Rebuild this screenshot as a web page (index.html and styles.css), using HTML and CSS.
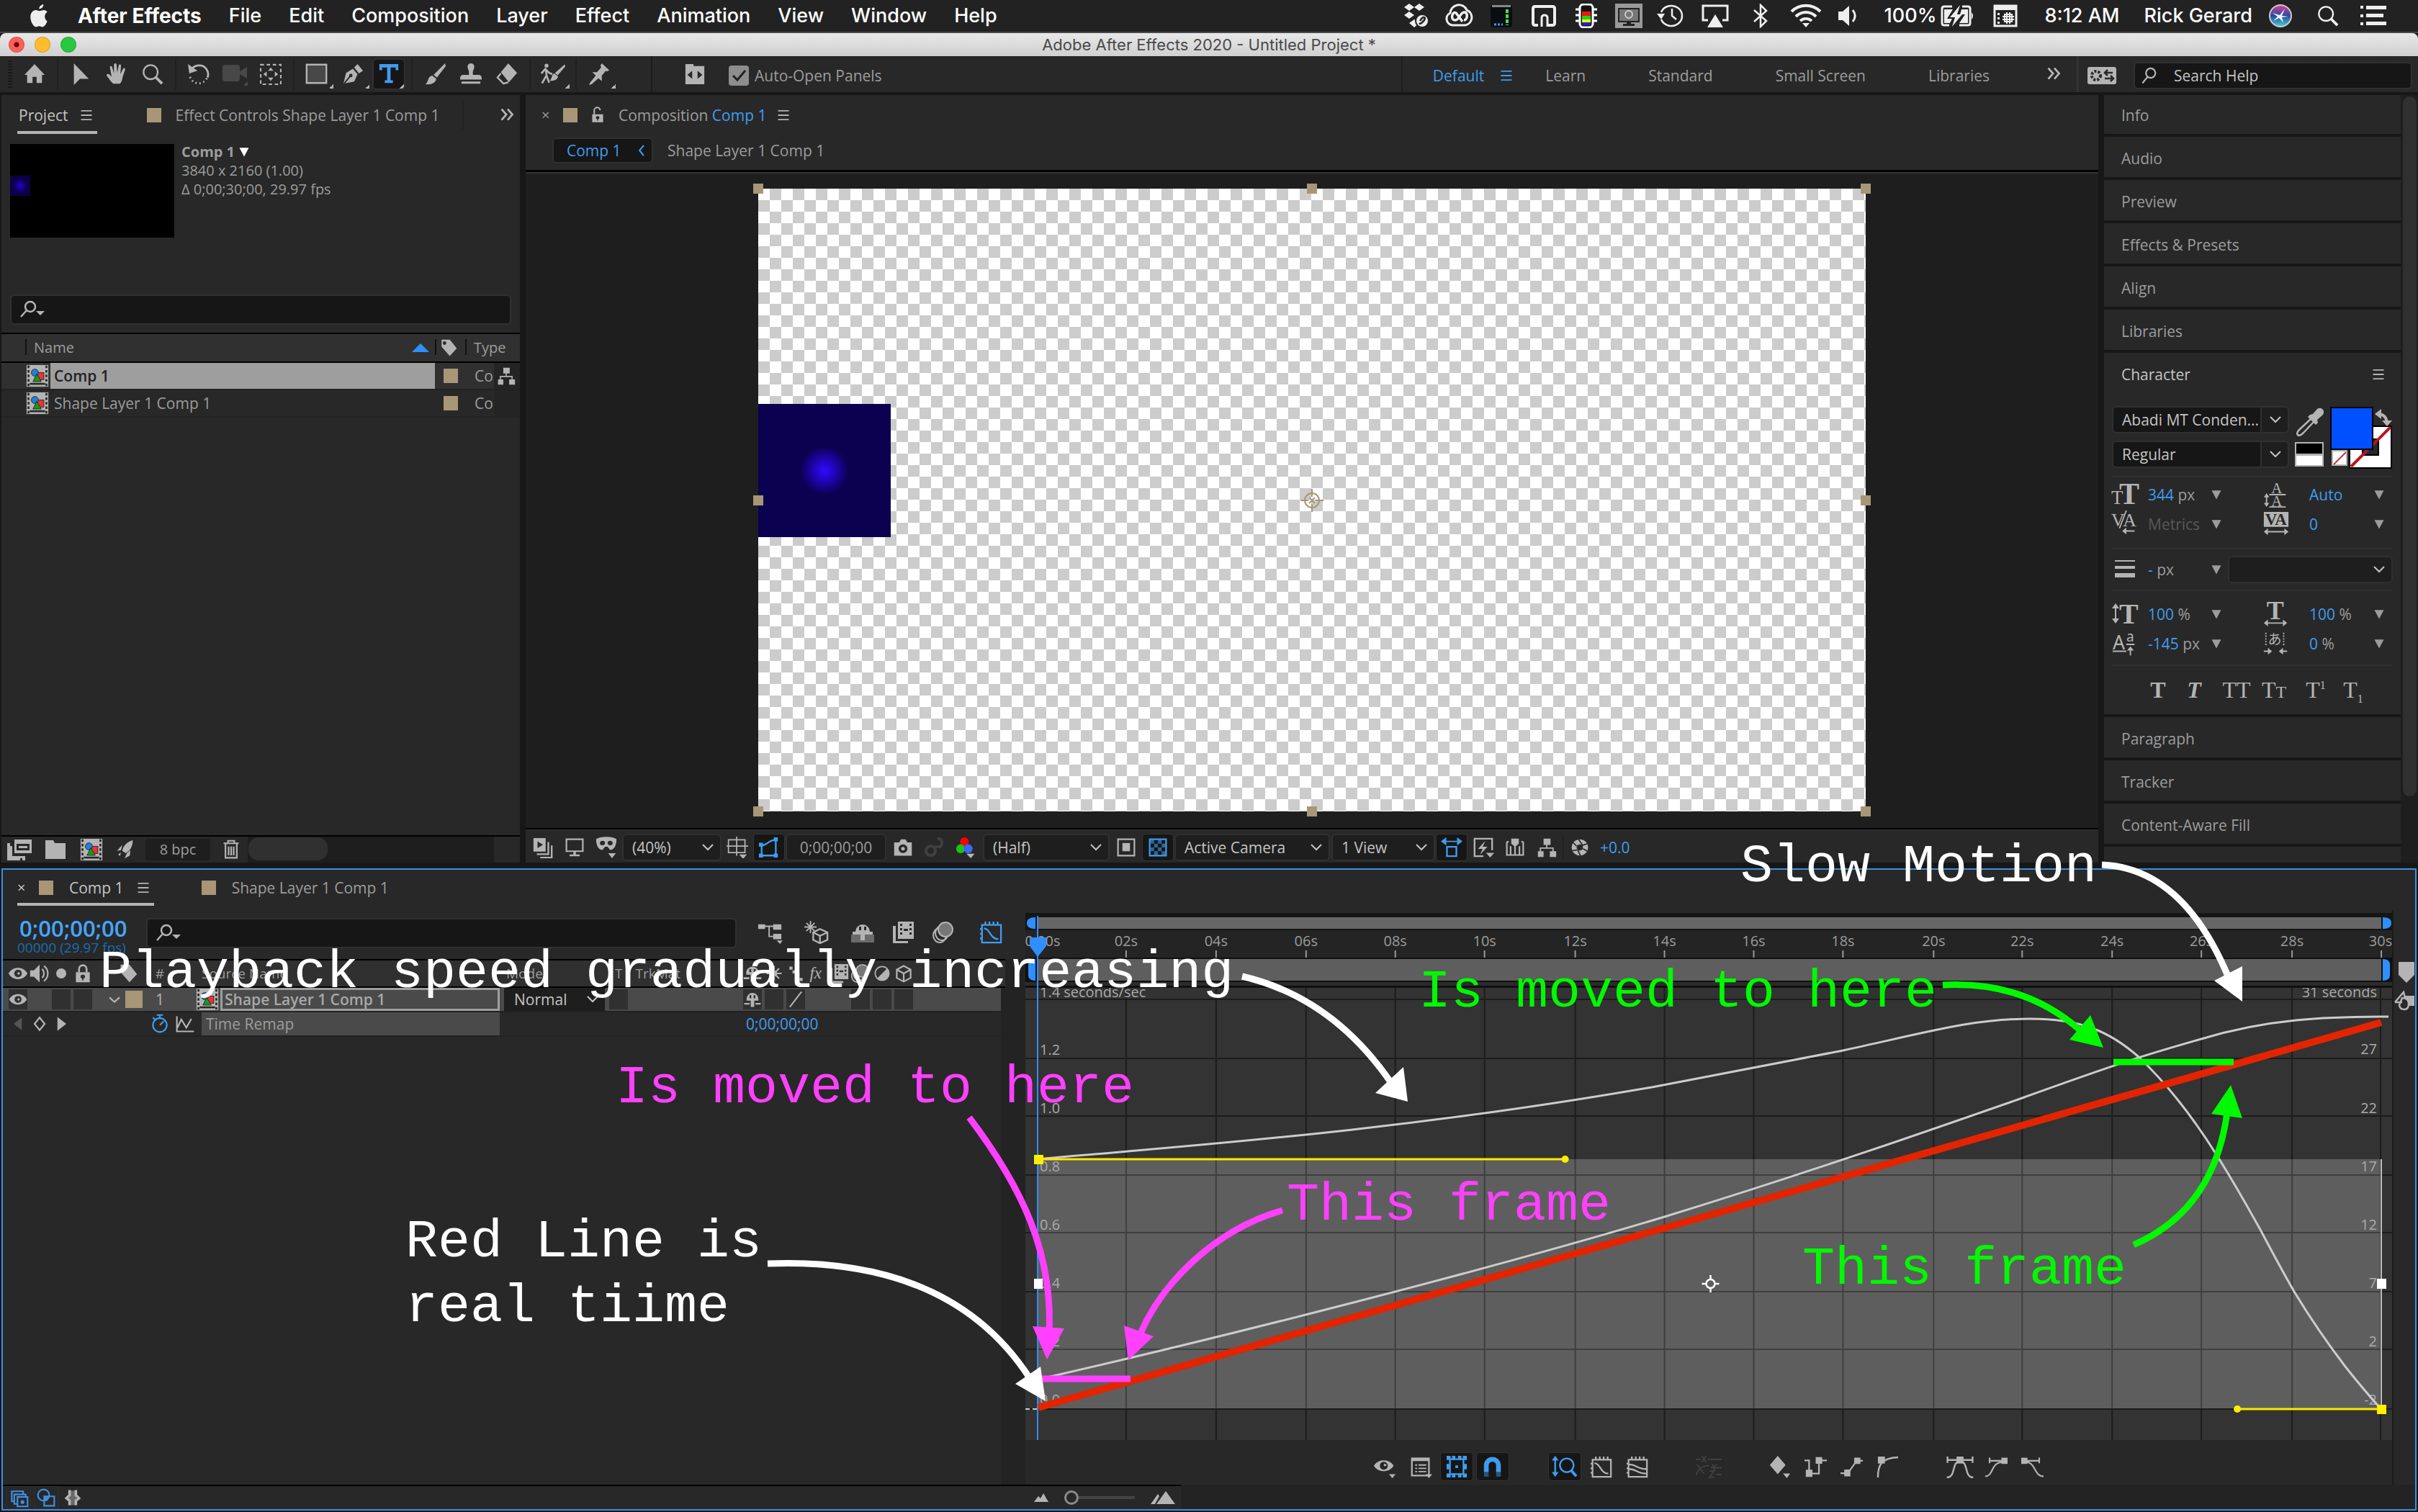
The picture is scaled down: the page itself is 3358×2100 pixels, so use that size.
FILE: index.html
```html
<!DOCTYPE html>
<html lang="en">
<head>
<meta charset="utf-8">
<title>Adobe After Effects 2020 - Untitled Project *</title>
<link rel="stylesheet" href="styles.css">
</head>
<body>
<svg class="sprite" aria-hidden="true">
  <symbol id="apple" viewBox="0 0 32 32"><path d="M21 1c.3 3-2.500 6-5.500 6C15.200 4 18 1.500 21 1zM26 23c-1.500 4-4 7.500-6.500 7.500-1.600 0-2.200-1-4-1s-2.500 1-4 1C8 30.500 4 24 4 17.500 4 12 7.500 8.500 11 8.500c2 0 3.500 1.200 5 1.200s3.200-1.400 5.500-1.200c2 .1 3.500 1 4.500 2.500-4.500 2.800-4 9.500 0 12z"/></symbol>
  <symbol id="menu" viewBox="0 0 32 32"><path d="M8 8.500h16v2H8zM8 15h16v2H8zM8 21.500h16v2H8z"/></symbol>
  <symbol id="search" viewBox="0 0 32 32"><g fill="none" stroke="currentColor" stroke-width="2.500"><circle cx="18" cy="12" r="7.500"/><path d="M13 18L5 28"/></g></symbol>
  <symbol id="searchmenu" viewBox="0 0 40 32"><g fill="none" stroke="currentColor" stroke-width="2.500"><circle cx="18" cy="12" r="7"/><path d="M13 17L5 26"/></g><path d="M26 18h12l-6 6z"/></symbol>
  <symbol id="lens" viewBox="0 0 32 32"><g fill="none" stroke="currentColor" stroke-width="2.500"><circle cx="13" cy="13" r="10.500"/><path d="M20 20l10 10" stroke-width="4"/></g></symbol>
  <symbol id="more" viewBox="0 0 32 32"><path fill="none" stroke="currentColor" stroke-width="3" d="M7 7l7 8-7 8M16 7l7 8-7 8"/></symbol>
  <symbol id="down" viewBox="0 0 32 32"><path fill="none" stroke="currentColor" stroke-width="2.500" d="M8 13l8 7 8-7"/></symbol>
  <symbol id="tri" viewBox="0 0 32 32"><path d="M8 9h16l-8 15z"/></symbol>
  <symbol id="home" viewBox="0 0 32 32"><path d="M16 1L31 17h-4v12h-8v-9h-6v9H5V17H1z"/></symbol>
  <symbol id="arrow" viewBox="0 0 32 32"><path d="M6 0l22 23H15L6 32z"/></symbol>
  <symbol id="hand" viewBox="0 0 32 32"><path d="M11 30C7 27 4 21 1 18c0-2.500 3-3 5-1l2.500 3L6 6c0-2.500 3-2.500 3.500 0l2.500 9L12 2c.5-2.500 3.500-2.500 4 0l.8 12L19 3c.8-2 3.500-1.500 3.500 .5L21.500 16l4-8c1-2 3.500-1 3 1.200-1 4-3 8-4 13-.6 4-2 6-3.500 8z"/></symbol>
  <symbol id="rotate" viewBox="0 0 32 32"><path fill="none" stroke="currentColor" stroke-width="3" d="M4 10C10 1 22 1 27 8c3 4 3.500 9 2 13"/><path d="M0 1l2 14 12-4z"/><path fill="none" stroke="currentColor" stroke-width="3" stroke-dasharray="2 4" d="M28 22c-5 10-20 11-25-2"/></symbol>
  <symbol id="video" viewBox="0 0 36 32"><path d="M1 7q0-4 4-4h16q4 0 4 4v5l10-6v16l-10-6v6q0 4-4 4H5q-4 0-4-4z"/><path d="M36 26v6h-6z"/></symbol>
  <symbol id="panbehind" viewBox="0 0 32 32"><path fill="none" stroke="currentColor" stroke-width="2.500" stroke-dasharray="5 4" d="M1 2h30v29H1z"/><path d="M16 6l4 5h-8zM16 26l4-5h-8zM5 16l5-4v8zM27 16l-5-4v8z"/></symbol>
  <symbol id="rect" viewBox="0 0 36 36"><path fill="#484848" stroke="currentColor" stroke-width="2.500" d="M3 4h29v27H3z"/></symbol>
  <symbol id="pen" viewBox="0 0 32 32"><path d="M2 30L6 14l10-6 7 8-5 11zM18 6l5-5 8 10-6 4z"/><path stroke="#282828" stroke-width="2" d="M3 30l9-11"/><circle cx="13" cy="18" r="2.500" fill="#282828"/></symbol>
  <symbol id="type" viewBox="0 0 32 32"><path d="M2 1h28v9h-4V6h-7.500v19H22v4H10v-4h3.500V6H6v4H2z"/></symbol>
  <symbol id="brush" viewBox="0 0 32 32"><path d="M31 0l1 4-13 17-5-4zM12 18l6 5c-1 6-7 9-16 8 5-4 3-12 10-13z"/></symbol>
  <symbol id="stamp" viewBox="0 0 32 32"><path d="M11 5a5 5 0 0 1 10 0c0 4-3 5-2 12h8q5 0 5 5v2H0v-2q0-5 5-5h8c1-7-2-8-2-12zM2 27h28v3H2z"/></symbol>
  <symbol id="eraser" viewBox="0 0 32 32"><path d="M18 0l13 14-12 14L7 13z"/><path fill="none" stroke="currentColor" stroke-width="2.500" d="M7 15l-5 6 9 9 7-2"/></symbol>
  <symbol id="roto" viewBox="0 0 40 32"><circle cx="10" cy="3" r="3"/><path fill="none" stroke="currentColor" stroke-width="3" d="M2 15l6-7 6 6 5 2M9 9l1 9 4 11M10 18l-7 12"/><path d="M38 1l1 3-12 14-4-4zM22 15l6 5c-2 5-6 7-13 6 4-3 2-9 7-11z"/></symbol>
  <symbol id="pin" viewBox="0 0 32 32"><path d="M20 0l11 10-3 2-2-1-6 7v8l-5-4-10 9-4 1 2-4 8-10-5-5h7l6-7-1-3z"/></symbol>
  <symbol id="scriptbox" viewBox="0 0 32 32"><path fill-rule="evenodd" d="M2 1h12v3h16v27H2zM12 11l-7 6 7 6zM20 11v12l7-6z"/></symbol>
  <symbol id="sync" viewBox="0 0 40 24"><rect width="40" height="24" rx="3"/><circle cx="12" cy="12" r="6" fill="none" stroke="#282828" stroke-width="4" stroke-dasharray="3 2"/><path stroke="#282828" stroke-width="2.500" fill="none" d="M24 8h11M24 16h11M28 4l-4 4 4 4M32 12l4 4-4 4"/></symbol>
  <symbol id="lock" viewBox="0 0 32 32"><path fill-rule="evenodd" d="M5 14h22v16H5zM16 18a3 3 0 0 0-1 6v3h2v-3a3 3 0 0 0-1-6z"/><path fill="none" stroke="currentColor" stroke-width="3" d="M10 14V9a6 6 0 0 1 12 0v5"/></symbol>
  <symbol id="unlock" viewBox="0 0 32 32"><path fill-rule="evenodd" d="M5 14h22v16H5zM16 18a3 3 0 0 0-1 6v3h2v-3a3 3 0 0 0-1-6z"/><path fill="none" stroke="currentColor" stroke-width="3" d="M9 14V7a6 6 0 0 1 12-1"/></symbol>
  <symbol id="tag" viewBox="0 0 32 32"><path fill-rule="evenodd" d="M4 2h14l12 15-12 13L4 14zM9 5a3 3 0 1 0 .1 0z"/></symbol>
  <symbol id="comp" viewBox="0 0 36 36"><path fill="#b4b4b4" d="M1 1h34v34H1z"/><path stroke="#282828" stroke-width="3" stroke-dasharray="4 3" d="M4 2v33M32 2v33"/><path fill="#282828" d="M6 29h24v3H6z"/><rect x="18" y="13" width="10" height="11" fill="#e33" stroke="#222"/><circle cx="14" cy="13" r="5.500" fill="#1e7fe0" stroke="#222"/><path fill="#169a1c" stroke="#222" d="M17 15l7 12H11z"/></symbol>
  <symbol id="flow" viewBox="0 0 32 32"><path d="M11 2h11v10H11zM2 22h9v9H2zM21 22h10v9H21z"/><path fill="none" stroke="currentColor" stroke-width="2" d="M16 10v6M6 24v-7h20v7"/></symbol>
  <symbol id="footage" viewBox="0 0 34 32"><path fill-rule="evenodd" d="M10 2h24v19H10zM13 8v9h18V8zM16 11h12v3H16z"/><path d="M0 7h4v4h3v14h18v6h-4v-3h-3v3H0z"/></symbol>
  <symbol id="folder" viewBox="0 0 32 32"><path d="M2 3h11l2 4h15v22H2z"/></symbol>
  <symbol id="rocket" viewBox="0 0 32 32"><path d="M30 0c0 10-4 18-12 22l-6-4C14 9 20 3 30 0zM12 8L3 18l7-1zM20 22l-4 9 9-5 1-9zM5 24l5-3-2 6z"/></symbol>
  <symbol id="trash" viewBox="3 0 26 32"><path fill="none" stroke="currentColor" stroke-width="2.500" d="M4 6h24M11 6V2h10v4M7 7v22h18V7M12 11v14M16 11v14M20 11v14"/></symbol>
  <symbol id="eye" viewBox="0 0 32 32"><path fill-rule="evenodd" d="M1 16C7 4 25 4 31 16 25 28 7 28 1 16zM16 10a6 6 0 1 0 .1 0z"/><circle cx="17" cy="16" r="2"/></symbol>
  <symbol id="speaker" viewBox="0 0 32 32"><path d="M1 11h6l9-9v28l-9-9H1z"/><path fill="none" stroke="currentColor" stroke-width="2.500" d="M20 9c4 4 4 10 0 14M23 4c8 6 8 18 0 24"/></symbol>
  <symbol id="dot" viewBox="0 0 32 32"><circle cx="16" cy="16" r="8"/></symbol>
  <symbol id="stopwatch" viewBox="0 0 32 32"><g fill="none" stroke="currentColor" stroke-width="2.500"><circle cx="16" cy="18" r="11"/><path d="M16 18l6-6M11 2h10M16 2v5M5 6l3 3"/></g></symbol>
  <symbol id="chart" viewBox="0 0 32 32"><path fill="none" stroke="currentColor" stroke-width="2.500" d="M3 4v24h27M4 22l6-13 8 13 8-14"/></symbol>
  <symbol id="left" viewBox="0 0 32 32"><path d="M22 6v20L9 16z"/></symbol>
  <symbol id="right" viewBox="0 0 32 32"><path d="M10 5v22l14-11z"/></symbol>
  <symbol id="diamond" viewBox="0 0 32 32"><path fill="none" stroke="currentColor" stroke-width="2.500" d="M16 6l8 10-8 10-8-10z"/></symbol>
  <symbol id="shy" viewBox="0 0 32 32"><path fill-rule="evenodd" d="M6 15a10 10 0 0 1 20 0v3h-7v11h-6V18H6zM11 9v5h3V9zM18 9v5h3V9z"/><path d="M2 22h9v3H2zM21 22h9v3h-9z"/></symbol>
  <symbol id="shybox" viewBox="0 0 32 32"><path fill="#6a6a6a" d="M0 19h32v11H0z"/><path fill-rule="evenodd" d="M2 15h4a10 10 0 0 1 20 0h4v4H19v8h-6v-8H2zM11 8v5h3V8zM18 8v5h3V8z"/></symbol>
  <symbol id="sun" viewBox="0 0 32 32"><circle cx="16" cy="16" r="5"/><path stroke="currentColor" stroke-width="2.500" d="M16 4v24M4 16h24M8 8l16 16M24 8L8 24"/></symbol>
  <symbol id="quality" viewBox="0 0 32 32"><path d="M6 5h5v5H6zM11 11h5v5h-5zM17 17h5v5h-5zM22 23h5v5h-5z"/></symbol>
  <symbol id="slash" viewBox="0 0 32 32"><path fill="none" stroke="currentColor" stroke-width="2.500" d="M6 29L26 3"/></symbol>
  <symbol id="fx" viewBox="0 0 32 32"><text x="4" y="24" font-size="26" font-style="italic" font-family="Liberation Serif,serif">fx</text></symbol>
  <symbol id="film" viewBox="0 0 32 32"><path fill-rule="evenodd" d="M9 1h22v24H9zM12 4v3h3V4zM12 10v3h3v-3zM12 16v3h3v-3zM25 4v3h3V4zM25 10v3h3v-3zM25 16v3h3v-3zM17 11v3h6v-3z"/><path d="M2 7h4v21h17v3H2z"/></symbol>
  <symbol id="blur" viewBox="0 0 32 32"><g fill="none" stroke="currentColor" stroke-width="2"><ellipse cx="11" cy="20" rx="9" ry="10"/><ellipse cx="14" cy="17" rx="9" ry="10"/><ellipse cx="19" cy="12" rx="10" ry="10" fill="#777"/></g></symbol>
  <symbol id="half" viewBox="0 0 32 32"><circle cx="16" cy="16" r="11" fill="none" stroke="currentColor" stroke-width="2"/><path d="M24 8A11 11 0 0 1 8 24z"/></symbol>
  <symbol id="cube" viewBox="0 0 32 32"><path fill="none" stroke="currentColor" stroke-width="2.500" d="M16 4l11 6v13l-11 6-11-6V10zM5 10l11 6 11-6M16 16v13"/></symbol>
  <symbol id="minflow" viewBox="0 0 36 32"><path d="M0 4h10v7H0zM22 4h12v8H22zM22 18h12v8H22zM27 28h9l-4 5z"/><path fill="none" stroke="currentColor" stroke-width="2" d="M8 7h16M16 7v15h8"/></symbol>
  <symbol id="draft" viewBox="0 0 36 34"><path fill="none" stroke="currentColor" stroke-width="2.500" d="M23 12l11 5v11l-11 5-10-5V17zM13 17l10 5 11-5M23 22v11"/><path stroke="currentColor" stroke-width="2" d="M9 0v18M0 9h18M3 3l12 12M15 3L3 15"/></symbol>
  <symbol id="graph" viewBox="0 0 34 34"><path fill="none" stroke="currentColor" stroke-width="2.500" d="M4 6h28v26H4zM9 1v5M15 1v5M21 1v5M27 1v5M1 12h3M1 19h3M1 26h3M7 11c9 0 9 16 21 16"/></symbol>
  <symbol id="graph2" viewBox="0 0 34 34"><path fill="none" stroke="currentColor" stroke-width="2.500" d="M4 6h28v26H4zM9 1v5M15 1v5M21 1v5M27 1v5M1 12h3M1 19h3M1 26h3M5 13c12 0 10 7 26 7M5 20c12 0 10 7 26 7"/></symbol>
  <symbol id="preview" viewBox="0 0 32 32"><path fill-rule="evenodd" d="M2 2h18v20H2zM8 7v10l8-5z"/><path fill="none" stroke="currentColor" stroke-width="2.500" d="M7 26h17V8M12 31h17V13"/></symbol>
  <symbol id="monitor" viewBox="0 0 32 32"><path fill="none" stroke="currentColor" stroke-width="2.500" d="M3 3h26v19H3z"/><path d="M14 22h4v5h6v3H8v-3h6z"/></symbol>
  <symbol id="mask" viewBox="0 0 34 34"><path fill-rule="evenodd" d="M1 4C8-1 26-1 33 4c0 12-5 17-10 17l-4-5h-4l-4 5C6 21 1 16 1 4zM7 9a4 4 0 0 0 8 1c0-4-6-5-8-1zM19 10a4 4 0 0 0 8-1c-2-4-8-3-8 1z"/><path d="M20 26h12l-6 8z"/></symbol>
  <symbol id="grid" viewBox="0 0 34 34"><path fill="none" stroke="currentColor" stroke-width="2" d="M3 5h26v20H3zM16 0v30M0 15h34"/><path d="M20 28h12l-6 7z"/></symbol>
  <symbol id="maskpath" viewBox="0 0 32 32"><path fill="none" stroke="currentColor" stroke-width="2.500" d="M5 28V13C14 13 14 5 26 5v23z"/><path d="M1 9h6v6H1zM23 1h6v6h-6zM1 25h6v6H1zM23 25h6v6h-6z"/></symbol>
  <symbol id="camera" viewBox="0 0 32 32"><path fill-rule="evenodd" d="M2 8h8l3-5h7l3 5h7v21H2zM16 11a7 7 0 1 0 .1 0zM16 15a3 3 0 1 0 .1 0z"/></symbol>
  <symbol id="ghost" viewBox="0 0 32 32"><path fill="none" stroke="currentColor" stroke-width="4" d="M10 14a7 7 0 1 0 .1 0M20 4c8-4 8 8 4 11h-8"/></symbol>
  <symbol id="rgb" viewBox="0 0 34 34"><circle cx="14" cy="8" r="7" fill="red"/><circle cx="8" cy="19" r="7" fill="#19c319"/><circle cx="20" cy="19" r="7" fill="#3868ff"/><path d="M17 27h13l-6 7z"/></symbol>
  <symbol id="roi" viewBox="0 0 32 32"><path fill="none" stroke="currentColor" stroke-width="2.500" d="M3 3h26v26H3z"/><path d="M10 9h12v13H10z"/></symbol>
  <symbol id="checker" viewBox="0 0 32 32"><path fill="none" stroke="currentColor" stroke-width="2.500" d="M3 3h26v26H3z"/><path opacity=".6" d="M4 4h6v6H4zM16 4h6v6h-6zM10 10h6v6h-6zM22 10h6v6h-6zM4 16h6v6H4zM16 16h6v6h-6zM10 22h6v6h-6zM22 22h6v6h-6z"/></symbol>
  <symbol id="aspect" viewBox="0 0 32 32"><path d="M0 7l8-6v5h16V1l8 6-8 6V8H8v5z"/><path fill="none" stroke="currentColor" stroke-width="2.500" d="M9 15h14v14H9z"/></symbol>
  <symbol id="fast" viewBox="0 0 32 32"><path fill="none" stroke="currentColor" stroke-width="2.500" d="M29 20V3H3v26h13"/><path d="M19 6L8 18h7l-4 9 11-12h-7zM20 24h12l-6 7z"/></symbol>
  <symbol id="timeline" viewBox="0 0 32 32"><path fill="none" stroke="currentColor" stroke-width="2.500" d="M3 7v21h26V7M3 7h3M26 7h3M9 27V14M23 27V14M16 27V14"/><path d="M10 2h12v8l-6 5-6-5z"/></symbol>
  <symbol id="shutter" viewBox="0 0 32 32"><path fill-rule="evenodd" d="M16 3a13 13 0 1 0 .1 0zM16 11a5 5 0 1 1-.1 0z"/><path stroke="#282828" stroke-width="2" d="M14 3l6 9M28 10l-9 3M28 22l-7-4M17 29l-4-8M4 21l9-1M5 8l6 6"/></symbol>
  <symbol id="list" viewBox="0 0 34 34"><path fill="none" stroke="currentColor" stroke-width="2.500" d="M3 4h26v26H3z"/><path d="M3 3h26v5H3zM8 13h3v2H8zM13 13h12v2H13zM8 18h3v2H8zM13 18h12v2H13zM8 23h3v2H8zM13 23h12v2H13zM24 28h10l-5 6z"/></symbol>
  <symbol id="eyemenu" viewBox="0 0 34 34"><path fill-rule="evenodd" d="M0 15C6 4 24 4 30 15 24 26 6 26 0 15zM15 9a6 6 0 1 0 .1 0z"/><circle cx="17" cy="14" r="2"/><path d="M23 28h10l-5 6z"/></symbol>
  <symbol id="transform" viewBox="0 0 32 32"><path fill="none" stroke="currentColor" stroke-width="2.500" d="M6 5h20v22H6z"/><path d="M1 0h6v6H1zM9 0h5v6H9zM18 0h5v6h-5zM25 0h6v6h-6zM1 26h6v6H1zM9 26h5v6H9zM18 26h5v6h-5zM25 26h6v6h-6zM1 12h5v8H1zM26 12h5v8h-5zM14 14h4v4h-4z"/></symbol>
  <symbol id="magnet" viewBox="0 0 32 32"><path fill="none" stroke="currentColor" stroke-width="7" d="M6.500 24V14a9 9 0 0 1 18 0v10"/><path opacity=".45" d="M3 24h7v7H3zM21 24h7v7h-7z"/></symbol>
  <symbol id="zoomfit" viewBox="0 0 38 32"><path fill="none" stroke="currentColor" stroke-width="2.500" d="M5 4v23"/><path d="M5 0l5 7H0zM5 31l5-7H0z"/><circle cx="22" cy="14" r="10" fill="none" stroke="currentColor" stroke-width="2.500"/><path stroke="currentColor" stroke-width="4" d="M28 21l8 9"/></symbol>
  <symbol id="xyz" viewBox="0 0 40 32"><path fill="none" stroke="currentColor" stroke-width="2" d="M0 5h8M18 5h20M22 17h16M2 12l10 14M0 28c6-14 14-14 20-14M30 27h8"/><path fill="none" stroke="currentColor" stroke-width="2" d="M9 0l6 9M15 0L9 9M24 12l3 5 3-5M27 17v5M20 22h7l-7 9h7"/></symbol>
  <symbol id="key" viewBox="0 0 34 34"><path d="M14 0l12 14-12 14L2 14zM22 27h11l-5 7z"/></symbol>
  <symbol id="hold" viewBox="0 0 34 32"><path fill="none" stroke="currentColor" stroke-width="2.500" d="M0 6h7v20M10 26h12V6h12"/><path d="M17 1h10v10H17zM2 20h10v11H2z"/></symbol>
  <symbol id="linear" viewBox="0 0 36 32"><path fill="none" stroke="currentColor" stroke-width="2.500" d="M0 26h12L26 6h10"/><path d="M22 1h10v10H22zM6 20h10v11H6z"/></symbol>
  <symbol id="auto" viewBox="0 0 32 32"><path fill="none" stroke="currentColor" stroke-width="2.500" d="M2 31C2 14 6 3 31 2"/><path d="M2 1h10v10H2z"/></symbol>
  <symbol id="ease" viewBox="0 0 38 32"><path fill="none" stroke="currentColor" stroke-width="2.500" d="M1 1v9M37 1v9M1 6h36M0 31c14 0 6-23 19-23s5 23 19 23"/><path d="M14 1h10v10H14z"/></symbol>
  <symbol id="easein" viewBox="0 0 36 32"><path fill="none" stroke="currentColor" stroke-width="2.500" d="M7 1v9M7 6h22M0 31c14 0 8-23 29-23"/><path d="M26 1h10v10H26z"/></symbol>
  <symbol id="easeout" viewBox="0 0 36 32"><path fill="none" stroke="currentColor" stroke-width="2.500" d="M29 1v9M29 6H7M36 31C20 31 24 8 7 8"/><path d="M0 1h10v10H0z"/></symbol>
</svg>

<nav class="macbar">
  <svg class="ic logo"><use href="#apple"/></svg>
  <a href="#" class="app">After Effects</a><a href="#">File</a><a href="#">Edit</a><a href="#">Composition</a><a href="#">Layer</a><a href="#">Effect</a><a href="#">Animation</a><a href="#">View</a><a href="#">Window</a><a href="#">Help</a>
  <span class="grow"></span>
  <span class="tray">
    <svg viewBox="0 0 40 34"><path d="M10 0l7 5-7 5-7-5zM24 0l7 5-7 5-7-5zM10 11l7 5-7 5-7-5zM17 22l7 5-7 6-7-6z"/><circle cx="28" cy="24" r="9" stroke="#222" stroke-width="2"/><path fill="none" stroke="#222" stroke-width="2.500" d="M25 24l3-4c4-3 5 1 2 4s-4 5-6 3"/></svg>
    <svg viewBox="0 0 40 34"><path fill="none" stroke="#eee" stroke-width="3" d="M11 30a9 9 0 0 1-3-17A12 12 0 0 1 31 9a11 11 0 0 1-2 21z"/><path fill="none" stroke="#eee" stroke-width="3.500" d="M25 25L16 13c-6-3-8 11-1 10 4 0 5-4 8-8s7-4 8 0-1 8-4 8"/></svg>
    <svg viewBox="0 0 40 34"><rect x="5" y="2" width="30" height="31" rx="4" fill="#0a0d12"/><path fill="#888" d="M7 2h26v3H7z"/><path stroke="#4ae04a" stroke-width="4" stroke-dasharray="5 2" d="M28 8v22"/><path stroke="#3b9bff" stroke-width="3" stroke-dasharray="3 2" d="M10 29h12"/></svg>
    <svg viewBox="0 0 40 34"><path fill="none" stroke="#eee" stroke-width="4" d="M24 30h8q3 0 3-3V7q0-3-3-3H8Q5 4 5 7v20q0 3 3 3h4"/><path fill="none" stroke="#eee" stroke-width="3" d="M17 32V20q0-4 4-4t4 4v12"/></svg>
    <svg viewBox="0 0 40 34"><rect x="11" y="1" width="18" height="32" rx="5" fill="#111" stroke="#fff" stroke-width="3"/><path stroke="#fff" stroke-width="3" d="M5 8h6M5 16h6M5 24h6M29 8h6M29 16h6M29 24h6"/><path fill="#f11" d="M14 11h12v6H14z"/><path fill="#1d1" d="M14 17h12v5H14z"/><path fill="#fe2" d="M14 22h12v4H14z"/><path fill="#22c" d="M14 26h12v4H14z"/></svg>
    <svg viewBox="0 0 40 34"><path fill="#999" d="M1 0h38v34H1z"/><path fill="#777" stroke="#222" stroke-width="2" d="M6 7h28v18H6z"/><path fill="#222" d="M17 25h6v3h5v3H12v-3h5z"/><circle cx="20" cy="15" r="5" fill="none" stroke="#ccc" stroke-width="2"/></svg>
    <svg viewBox="0 0 40 34"><path fill="none" stroke="#eee" stroke-width="2.500" d="M6 12a15 14 0 1 1 0 10M21 7v10l6 5"/><path d="M0 14h11l-5 8z"/></svg>
    <svg class="wide" viewBox="8 0 44 34"><path fill="none" stroke="#eee" stroke-width="3" d="M20 23h-7V3h34v20h-7"/><path d="M30 15l11 18H19z"/></svg>
    <svg class="wide" viewBox="8 0 44 34"><path fill="none" stroke="#eee" stroke-width="2.500" d="M21 9l17 15-8 8V2l8 8-17 15"/></svg>
    <svg class="wide" viewBox="8 0 44 34"><g fill="none" stroke="#eee" stroke-width="4"><path d="M10 11c11-11 29-11 40 0M16 18c8-8 20-8 28 0M22 24c5-4 11-4 16 0"/></g><path d="M30 33l-5-6h10z"/></svg>
    <svg viewBox="0 0 40 34"><path d="M4 11h6l9-8v28l-9-8H4z"/><path fill="none" stroke="#eee" stroke-width="3" d="M24 9c4 5 4 11 0 16"/></svg>
  </span>
  <span class="status">100%</span>
  <svg class="batt" viewBox="0 0 48 32"><path fill="none" stroke="#eee" stroke-width="3" d="M16 3H5Q2 3 2 6v20q0 3 3 3h7M30 3h8q3 0 3 3v20q0 3-3 3H26"/><path d="M5 7h12L9 20h7l-3 6H5zM29 7h9v19H26l8-12h-7zM27 1L13 18h7l-4 13 14-17h-7zM43 11q4 5 0 10z"/></svg>
  <svg class="cal" viewBox="0 0 36 32"><path fill="none" stroke="#eee" stroke-width="3" d="M3 2h30v28H3z"/><path d="M3 2h30v6H3zM7 12h3v3H7zM7 18h3v3H7zM7 24h3v3H7z"/><path fill="none" stroke="#eee" stroke-width="2" d="M17 14h10v10H17zM14 17h16M14 21h16M20 11v16M24 11v16"/></svg>
  <span class="status clock">8:12 AM</span>
  <span class="status user">Rick Gerard</span>
  <svg class="siri" viewBox="0 0 34 34"><defs><linearGradient id="siri" x2="0" y2="1"><stop offset="0" stop-color="#e0409a"/><stop offset=".5" stop-color="#274a9c"/><stop offset="1" stop-color="#47d0d8"/></linearGradient></defs><circle cx="17" cy="17" r="15" fill="url(#siri)" stroke="#ccc" stroke-width="2"/><path fill="#eaf6ff" d="M6 13l10 3 7-9-4 10 9 1-9 1 2 7-6-6-8 4 6-6z"/></svg>
  <svg class="ic"><use href="#lens"/></svg>
  <svg class="notif" viewBox="0 0 36 28"><path d="M0 0h4v4H0zM8 0h28v5H8zM0 12h4v4H0zM8 11h24v5H8zM0 23h4v4H0zM8 22h28v5H8z"/></svg>
</nav>

<header class="titlebar"><i class="light red"></i><i class="light amber"></i><i class="light green"></i><span class="doc">Adobe After Effects 2020 - Untitled Project *</span></header>

<div class="toolbar">
  <span class="grip"></span>
  <div class="tools"><button aria-label="Home"><svg class="ic"><use href="#home"/></svg></button></div>
  <div class="tools"><button aria-label="Selection"><svg class="ic"><use href="#arrow"/></svg></button><button aria-label="Hand"><svg class="ic"><use href="#hand"/></svg></button><button aria-label="Zoom"><svg class="ic"><use href="#lens"/></svg></button></div>
  <div class="tools"><button aria-label="Rotate"><svg class="ic"><use href="#rotate"/></svg></button><button class="off" aria-label="Camera"><svg class="ic big"><use href="#video"/></svg></button><button aria-label="Pan behind"><svg class="ic"><use href="#panbehind"/></svg></button></div>
  <div class="tools"><button class="sub" aria-label="Rectangle"><svg class="ic big"><use href="#rect"/></svg></button><button class="sub" aria-label="Pen"><svg class="ic"><use href="#pen"/></svg></button><button class="sub on" aria-label="Type"><svg class="ic"><use href="#type"/></svg></button></div>
  <div class="tools"><button aria-label="Brush"><svg class="ic"><use href="#brush"/></svg></button><button aria-label="Clone stamp"><svg class="ic"><use href="#stamp"/></svg></button><button aria-label="Eraser"><svg class="ic"><use href="#eraser"/></svg></button></div>
  <div class="tools"><button class="sub" aria-label="Roto brush"><svg class="ic big"><use href="#roto"/></svg></button></div>
  <div class="tools last"><button class="sub" aria-label="Puppet pin"><svg class="ic"><use href="#pin"/></svg></button></div>
  <button class="script" aria-label="Panels"><svg class="ic"><use href="#scriptbox"/></svg></button>
  <label class="auto"><input type="checkbox" checked>Auto-Open Panels</label>
  <span class="grow"></span>
  <div class="spaces"><a href="#" class="cur">Default</a><svg class="ic cur"><use href="#menu"/></svg><a href="#" class="learn">Learn</a><a href="#">Standard</a><a href="#">Small Screen</a><a href="#">Libraries</a><svg class="ic"><use href="#more"/></svg></div>
  <div class="help"><button aria-label="Sync settings"><svg class="syncic"><use href="#sync"/></svg></button><label class="field"><svg class="ic"><use href="#search"/></svg><input type="text" placeholder="Search Help" aria-label="Search Help"></label></div>
</div>

<main class="work">
  <section class="panel project">
    <div class="tabs"><a href="#" class="tab active">Project <svg class="ic"><use href="#menu"/></svg></a><a href="#" class="tab second"><i class="chip"></i>Effect Controls Shape Layer 1 Comp 1</a><span class="grow"></span><button class="over" aria-label="More tabs"><svg class="ic"><use href="#more"/></svg></button></div>
    <div class="info"><div class="thumb"><i></i></div><div class="facts"><div class="fname"><b>Comp 1</b><svg class="small white"><use href="#tri"/></svg></div><div>3840 x 2160 (1.00)</div><div>Δ 0;00;30;00, 29.97 fps</div></div></div>
    <label class="field wide"><svg class="smenu"><use href="#searchmenu"/></svg><input type="text" aria-label="Search project"></label>
    <table class="items">
      <colgroup><col class="c-pad"><col class="c-icon"><col><col class="c-tag"><col class="c-type"><col class="c-flow"></colgroup>
      <thead><tr><th></th><th colspan="2"><div class="sorted">Name<svg viewBox="0 0 24 12"><path d="M12 0l12 12H0z"/></svg></div></th><th><svg class="ic tagic"><use href="#tag"/></svg></th><th>Type</th><th></th></tr></thead>
      <tbody>
        <tr class="sel"><td colspan="2"><svg class="ic"><use href="#comp"/></svg></td><td class="name">Comp 1</td><td><i class="chip"></i></td><td>Co</td><td class="strip"><svg class="ic"><use href="#flow"/></svg></td></tr>
        <tr><td colspan="2"><svg class="ic"><use href="#comp"/></svg></td><td class="name">Shape Layer 1 Comp 1</td><td><i class="chip"></i></td><td>Co</td><td class="strip"></td></tr>
      </tbody>
    </table>
    <div class="rest"></div>
    <div class="foot"><svg class="ic"><use href="#footage"/></svg><svg class="ic"><use href="#folder"/></svg><svg class="ic"><use href="#comp"/></svg><svg class="ic slim"><use href="#rocket"/></svg><button class="bpc">8 bpc</button><svg class="ic slim"><use href="#trash"/></svg><div class="hscroll"><i></i></div></div>
  </section>

  <section class="panel viewer">
    <div class="tabs"><span class="x">×</span><i class="chip"></i><svg class="lockic"><use href="#unlock"/></svg><span>Composition <a href="#" class="cur">Comp 1</a></span><svg class="ic"><use href="#menu"/></svg></div>
    <div class="crumbs"><button>Comp 1 <svg viewBox="0 0 8 16"><path fill="none" stroke="currentColor" stroke-width="2" d="M7 1L1 8l6 7"/></svg></button><a href="#">Shape Layer 1 Comp 1</a></div>
    <div class="stage"><div class="canvas"><i class="shape"></i><i class="h tl"></i><i class="h tc"></i><i class="h tr"></i><i class="h ml"></i><i class="h mr"></i><i class="h bl"></i><i class="h bc"></i><i class="h br"></i>
      <svg class="anchor" viewBox="0 0 32 32"><g fill="none" stroke="#a8977a" stroke-width="2"><circle cx="16" cy="16" r="10"/><path d="M16 0v11M16 21v11M0 16h11M21 16h11M12 12l8 8M20 12l-8 8"/></g></svg></div></div>
    <div class="viewbar">
      <span><svg class="ic"><use href="#preview"/></svg></span><span><svg class="ic s"><use href="#monitor"/></svg></span><span><svg class="ic"><use href="#mask"/></svg></span>
      <select class="w138" aria-label="Magnification"><option>(40%)</option></select>
      <span><svg class="ic"><use href="#grid"/></svg></span><button class="on" aria-label="Mask visibility"><svg class="ic"><use href="#maskpath"/></svg></button>
      <button class="time">0;00;00;00</button>
      <span><svg class="ic s"><use href="#camera"/></svg></span><span class="dim"><svg class="ic"><use href="#ghost"/></svg></span><span><svg class="ic"><use href="#rgb"/></svg></span>
      <select class="w176" aria-label="Resolution"><option>(Half)</option></select>
      <span><svg class="ic s"><use href="#roi"/></svg></span><button class="on" aria-label="Transparency grid"><svg class="ic s"><use href="#checker"/></svg></button>
      <select class="w216" aria-label="3D view"><option>Active Camera</option></select>
      <select class="w144" aria-label="View layout"><option>1 View</option></select>
      <button class="on" aria-label="Pixel aspect"><svg class="ic"><use href="#aspect"/></svg></button><span><svg class="ic"><use href="#fast"/></svg></span><span><svg class="ic s"><use href="#timeline"/></svg></span><span><svg class="ic s"><use href="#flow"/></svg></span><i class="vsep"></i><span><svg class="ic s"><use href="#shutter"/></svg></span><b class="expo">+0.0</b>
    </div>
  </section>

  <aside class="side">
    <div class="stack">
      <h2>Info</h2><h2>Audio</h2><h2>Preview</h2><h2>Effects &amp; Presets</h2><h2>Align</h2><h2>Libraries</h2>
      <div class="char">
        <h2 class="bright">Character<svg class="ic"><use href="#menu"/></svg></h2>
        <div class="fonts">
          <div class="picks"><select class="split" aria-label="Font family"><option>Abadi MT Conden...</option></select><select class="split" aria-label="Font style"><option>Regular</option></select></div>
          <svg class="drop" viewBox="0 0 40 86"><path fill="none" stroke="#b4b4b4" stroke-width="2.500" d="M23 17L7 32c-3 3-5 6-3 8s5 0 8-3l15-16"/><path fill="#b4b4b4" d="M21 12l4-1 6-7q5-3 8 1t-1 8l-7 6 1 4-3 3L18 15z"/><path fill="#b4b4b4" d="M0 50h40v34H0z"/><path fill="#000" d="M2 52h36v14H2z"/><path fill="#fff" d="M2 69h36v13H2z"/></svg>
          <svg class="swatches" viewBox="0 0 88 88"><path fill="#fff" stroke="#000" stroke-width="2" d="M27 28h58v58H27z"/><path fill="#282828" stroke="#000" stroke-width="2" d="M45 46h22v22H45z"/><path stroke="#b5171b" stroke-width="4" d="M29 84L84 29"/><path fill="#0050ff" stroke="#000" stroke-width="2" d="M1 2h58v58H1z"/><path fill="#fff" stroke="#b4b4b4" stroke-width="2" d="M3 62h20v20H3z"/><path stroke="#c33" stroke-width="2" d="M5 81L22 64"/><path fill="none" stroke="#b4b4b4" stroke-width="4" d="M66 11q12 0 13 13"/><path fill="#b4b4b4" d="M62 11l9-7v14zM72 20h14l-7 8z"/></svg>
        </div>
        <div class="vals upper">
          <svg class="gl" viewBox="0 0 40 36"><text x="1" y="31" font-size="27">T</text><text x="12" y="31" font-size="42" font-weight="700">T</text></svg><span class="v"><b>344</b> px</span><svg class="small"><use href="#tri"/></svg>
          <svg class="gl" viewBox="0 0 40 40"><text x="13" y="18" font-size="22">A</text><text x="13" y="37" font-size="22">A</text><path d="M10 19h24v2H10zM10 37h24v2H10zM6 18l4 6H7v8h3l-4 6-4-6h3v-8H2z"/></svg><span class="v"><b>Auto</b></span><svg class="small"><use href="#tri"/></svg>
          <svg class="gl" viewBox="0 0 40 40"><text x="0" y="23" font-size="27">V</text><text x="17" y="23" font-size="27">A</text><path d="M21 0h2L13 26h-2zM16 30l6-5v4h12v2H22v4z"/></svg><span class="v faint">Metrics</span><svg class="small"><use href="#tri"/></svg>
          <svg class="gl" viewBox="0 0 40 40"><path d="M2 2h36v22H2z"/><text x="4" y="21" font-size="24" fill="#282828" font-weight="700">VA</text><path d="M2 31l6-5v4h24v-4l6 5-6 5v-4H8v4z"/></svg><span class="v"><b>0</b></span><svg class="small"><use href="#tri"/></svg>
        </div>
        <div class="vals strokes"><svg class="gl" viewBox="0 0 40 36"><path d="M6 5h28v2H6zM6 13h28v4H6zM6 23h28v6H6z"/></svg><span class="v"><b>-</b> px</span><svg class="small"><use href="#tri"/></svg><select aria-label="Stroke style"><option></option></select></div>
        <div class="vals">
          <svg class="gl" viewBox="0 0 40 36"><path d="M7 3l5 7H8v14h4l-5 7-5-7h4V10H2z"/><text x="12" y="31" font-size="40" font-weight="700">T</text></svg><span class="v"><b>100</b> %</span><svg class="small"><use href="#tri"/></svg>
          <svg class="gl" viewBox="0 0 40 40"><text x="6" y="27" font-size="38" font-weight="700">T</text><path d="M2 33l6-5v4h22v-4l6 5-6 5v-4H8v4z"/></svg><span class="v"><b>100</b> %</span><svg class="small"><use href="#tri"/></svg>
          <svg class="gl" viewBox="0 0 40 40"><text x="2" y="28" font-size="28" class="sans">A</text><text x="22" y="17" font-size="20" class="sans">a</text><path d="M2 30h20v2H2zM22 20h12v2H22zM28 24l5 6h-4v7h-2v-7h-4z"/></svg><span class="v"><b>-145</b> px</span><svg class="small"><use href="#tri"/></svg>
          <svg class="gl" viewBox="0 0 40 40"><text x="8" y="21" font-size="20" class="cjk">あ</text><path fill="none" stroke="currentColor" stroke-width="2" stroke-dasharray="2 2" d="M5 4v20M31 4v20"/><path d="M2 30h6v-4l6 5-6 5v-4H2zM36 30h-6v-4l-6 5 6 5v-4h6z"/></svg><span class="v"><b>0</b> %</span><svg class="small"><use href="#tri"/></svg>
        </div>
        <div class="faces"><button class="w">T</button><button><em>T</em></button><button class="two first">TT</button><button class="two">T<small>T</small></button><button class="two gap">T<sup>1</sup></button><button class="two">T<sub>1</sub></button></div>
      </div>
      <h2>Paragraph</h2><h2>Tracker</h2><h2>Content-Aware Fill</h2><h2>Brushes</h2>
    </div>
    <div class="track"><i></i></div>
  </aside>
</main>

<section class="timeline">
  <div class="tabs"><a href="#" class="tab active"><span class="x">×</span><i class="chip"></i>Comp 1 <svg class="ic"><use href="#menu"/></svg></a><a href="#" class="tab third"><i class="chip"></i>Shape Layer 1 Comp 1</a></div>
  <div class="split-view">
    <div class="layers">
      <div class="ctrl">
        <div class="now"><b>0;00;00;00</b><span>00000 (29.97 fps)</span></div>
        <label class="field"><svg class="smenu"><use href="#searchmenu"/></svg><input type="text" aria-label="Search layers"></label>
        <div class="switches"><svg class="ic"><use href="#minflow"/></svg><svg class="ic"><use href="#draft"/></svg><svg class="ic"><use href="#shybox"/></svg><svg class="ic"><use href="#film"/></svg><svg class="ic"><use href="#blur"/></svg><svg class="ic cur"><use href="#graph"/></svg></div>
      </div>
      <div class="row head">
        <svg class="ic k1"><use href="#eye"/></svg><svg class="ic k2"><use href="#speaker"/></svg><svg class="ic k3"><use href="#dot"/></svg><svg class="ic k4"><use href="#lock"/></svg><span class="k-tag"><svg class="ic"><use href="#tag"/></svg></span><span class="k-num">#</span><span class="k-src">Source Name</span><span class="k-mode">Mode</span><span class="k-trk"><span>T</span><span>TrkMat</span></span>
        <svg class="ic s1"><use href="#shy"/></svg><svg class="ic s2"><use href="#sun"/></svg><svg class="ic s3"><use href="#quality"/></svg><svg class="ic s4"><use href="#fx"/></svg><svg class="ic s5"><use href="#film"/></svg><svg class="ic s6"><use href="#blur"/></svg><svg class="ic s7"><use href="#half"/></svg><svg class="ic s8"><use href="#cube"/></svg>
      </div>
      <div class="row layer">
        <span class="box k1"><svg class="ic"><use href="#eye"/></svg></span><span class="box k3"></span><span class="box k4"></span>
        <svg class="ic k-chev"><use href="#down"/></svg><i class="chip k-chip"></i><span class="k-num">1</span><svg class="ic k-comp"><use href="#comp"/></svg><input class="lname" type="text" value="Shape Layer 1 Comp 1" aria-label="Layer name">
        <select aria-label="Blending mode"><option>Normal</option></select><span class="box k-t"></span>
        <span class="box s1"><svg class="ic"><use href="#shy"/></svg></span><span class="box s2"></span><span class="box s3"><svg class="ic"><use href="#slash"/></svg></span><span class="box s6"></span><span class="box s7"></span><span class="box s8"></span>
      </div>
      <div class="row prop">
        <svg class="ic k1 dim2"><use href="#left"/></svg><svg class="ic k2"><use href="#diamond"/></svg><svg class="ic k3"><use href="#right"/></svg>
        <span class="k-num"><svg class="ic cur"><use href="#stopwatch"/></svg></span><svg class="ic k-chart"><use href="#chart"/></svg><span class="pname">Time Remap</span><span class="pval">0;00;00;00</span>
      </div>
      <div class="void"></div>
    </div>
    <div class="grapharea">
      <svg class="plot" viewBox="1424 1264 1899 740" preserveAspectRatio="none">
        <path fill="#151515" d="M1424 1268h1899v24H1424z"/><path fill="#666" d="M1441 1274h1867v16H1441z"/>
        <path fill="#2f8fff" d="M1438 1274q-12 0-12 8t12 8zM3310 1274q12 0 12 8t-12 8z"/>
        <path fill="#242424" d="M1424 1292h1899v38H1424z"/>
        <path fill="#101010" d="M1424 1330h1899v41H1424z"/><path fill="#5e5e5e" d="M1441 1332h1867v30H1441z"/><path fill="#2b2b2b" d="M1424 1364h1899v5H1424z"/>
        <path fill="#2f8fff" d="M1438 1332q-10 0-10 8v14q0 8 10 8zM3310 1332q10 0 10 8v14q0 8-10 8z"/>
        <path fill="#333" d="M1424 1371h1899v629H1424z"/>
        <path fill="#4c4c4c" d="M1441 1610h1867v346H1441z"/>
        <path class="gridl" d="M1564 1371v629M1689 1371v629M1814 1371v629M1938 1371v629M2062 1371v629M2188 1371v629M2312 1371v629M2436 1371v629M2560 1371v629M2686 1371v629M2809 1371v629M2934 1371v629M3058 1371v629M3184 1371v629M3307 1371v629M1424 1388h1899M1424 1470h1899M1424 1550h1899M1424 1632h1899M1424 1712h1899M1424 1794h1899M1424 1874h1899M1424 1957h1899"/>
        <path fill="#fff" fill-opacity=".1" d="M1441 1610h1867v346H1441z"/>
        <path stroke="#999" stroke-width="2" d="M1564 1320v10M1689 1320v10M1814 1320v10M1938 1320v10M2062 1320v10M2188 1320v10M2312 1320v10M2436 1320v10M2560 1320v10M2686 1320v10M2809 1320v10M2934 1320v10M3058 1320v10M3184 1320v10M3308 1320v10"/>
        <g class="ticks"><text x="1448" y="1314">0:00s</text><text x="1564" y="1314">02s</text><text x="1689" y="1314">04s</text><text x="1814" y="1314">06s</text><text x="1938" y="1314">08s</text><text x="2062" y="1314">10s</text><text x="2188" y="1314">12s</text><text x="2312" y="1314">14s</text><text x="2436" y="1314">16s</text><text x="2560" y="1314">18s</text><text x="2686" y="1314">20s</text><text x="2809" y="1314">22s</text><text x="2934" y="1314">24s</text><text x="3058" y="1314">26s</text><text x="3184" y="1314">28s</text><text x="3307" y="1314">30s</text></g>
        <g class="axis"><text x="1444" y="1385">1.4 seconds/sec</text><text x="1444" y="1465">1.2</text><text x="1444" y="1546">1.0</text><text x="1444" y="1627">0.8</text><text x="1444" y="1708">0.6</text><text x="1444" y="1789">0.4</text><text x="1444" y="1870">0.2</text><text x="1444" y="1951">0.0</text></g>
        <g class="axis end"><text x="3302" y="1385">31 seconds</text><text x="3302" y="1464">27</text><text x="3302" y="1546">22</text><text x="3302" y="1627">17</text><text x="3302" y="1708">12</text><text x="3302" y="1789">7</text><text x="3302" y="1870">2</text><text x="3302" y="1951">-2</text></g>
        <path fill="#101010" d="M1424 1369h1899v3H1424z"/>
        <path class="curve" d="M1441 1610C1640 1592 1940 1572 2300 1509C2400 1490 2480 1475 2560 1459C2680 1433 2740 1415 2820 1415C2890 1415 2930 1432 2971 1468C3015 1510 3050 1557 3081 1607C3103 1642 3120 1672 3140 1708C3157 1740 3172 1768 3187 1794C3215 1840 3235 1868 3258 1898Q3285 1932 3306 1955"/>
        <path class="curve" d="M1441 1916C1700 1857 2062 1765 2312 1690C2520 1626 2686 1568 2809 1525C2934 1480 2973 1467 3058 1443C3150 1415 3230 1412 3318 1412"/>
        <path stroke="#bbb" stroke-width="2" d="M3308 1610v346"/>
        <path fill="none" stroke="#ffe800" stroke-width="3" d="M1441 1610h733M3108 1957h200"/><circle cx="2174" cy="1610" r="5" fill="#ffee00"/><circle cx="3108" cy="1957" r="5" fill="#ffee00"/>
        <path stroke="#2f8fff" stroke-width="2" d="M1441 1272v728"/><path fill="#2f8fff" d="M1430 1302h23v12l-12 15-11-15z"/>
        <path fill="#ffee00" d="M1436 1604h13v13h-13zM3302 1951h13v13h-13z"/><path fill="#fff" d="M1436 1776h12v14h-12zM3302 1776h13v14h-13z"/>
        <g fill="none" stroke="#fff" stroke-width="2.500"><circle cx="2376" cy="1783" r="6"/><path d="M2376 1771v6M2376 1789v6M2364 1783h6M2382 1783h6"/></g>
        <path stroke="#ccc" stroke-width="2" stroke-dasharray="6 4" d="M1424 1957h16"/>
      </svg>
      <div class="gbar">
        <svg class="ic"><use href="#eyemenu"/></svg><svg class="ic"><use href="#list"/></svg><button class="on" aria-label="Transform box"><svg class="ic"><use href="#transform"/></svg></button><button class="on" aria-label="Snap"><svg class="ic"><use href="#magnet"/></svg></button>
        <button class="on g1" aria-label="Auto-zoom height"><svg class="ic big"><use href="#zoomfit"/></svg></button><svg class="ic"><use href="#graph"/></svg><svg class="ic"><use href="#graph2"/></svg>
        <svg class="ic big g1 dim"><use href="#xyz"/></svg>
        <svg class="ic g1"><use href="#key"/></svg><svg class="ic"><use href="#hold"/></svg><svg class="ic"><use href="#linear"/></svg><svg class="ic"><use href="#auto"/></svg>
        <svg class="ic big g1"><use href="#ease"/></svg><svg class="ic"><use href="#easein"/></svg><svg class="ic"><use href="#easeout"/></svg>
      </div>
    </div>
    <div class="edge"><svg viewBox="0 0 32 180"><path fill="#b4b4b4" d="M7 72h22v18l-11 11L7 90z"/><path fill="#b4b4b4" d="M14 119h15v14H14z"/><path fill="#282828" stroke="#b4b4b4" stroke-width="2.500" d="M2 128l12-14 2 8M2 128h10M12 122q9 0 9 8t-6 8-7-6z"/></svg></div>
  </div>
  <div class="status-row">
    <div class="sl"><button aria-label="Layer switches"><svg class="ic" viewBox="0 0 32 32"><g fill="none" stroke="currentColor" stroke-width="2.500"><path d="M9 22H5V6h18v4M13 26H9V11h18v4M14 15h16v15H14z"/></g><circle cx="22" cy="23" r="3"/></svg></button><button aria-label="Transfer controls"><svg class="ic" viewBox="0 0 32 32"><g fill="none" stroke="currentColor" stroke-width="2.500"><circle cx="12" cy="12" r="9"/><path d="M13 14h16v15H13z"/></g><path d="M13 14h8l-3 7h-5z"/></svg></button><svg class="ic grey" viewBox="0 0 32 32"><path fill="#6a6a6a" d="M9 5h13v23H9z"/><path fill="none" stroke="currentColor" stroke-width="4" d="M11 4v8l-5 5 5 4v7M21 4v8l5 5-5 4v7"/></svg></div>
    <div class="zoomer"><svg viewBox="0 0 20 12"><path d="M0 12l6-8 3 3 4-7 7 12z"/></svg><input type="range" min="0" max="100" value="0" aria-label="Timeline zoom"><svg class="bigm" viewBox="0 0 34 18"><path d="M0 18L10 4l2 3-6 11zM8 18L21 0l13 18z"/></svg></div>
  </div>
</section>

<svg class="notes" viewBox="0 0 3358 2100" preserveAspectRatio="none">
  <g fill="none" stroke-width="9">
    <path stroke="#e32400" stroke-width="10" d="M1442 1955L3307 1420"/>
    <path stroke="#ff40ff" d="M1444 1915h126"/><path stroke="#00f900" d="M2935 1475h167"/>
    <path stroke="#fff" d="M1725 1356Q1850 1385 1932 1504M2919 1201Q3032 1206 3095 1358M1066 1755Q1320 1745 1430 1914"/>
    <path stroke="#ff40ff" d="M1346 1552C1420 1650 1462 1740 1457 1850M1781 1681C1680 1710 1610 1790 1584 1852"/>
    <path stroke="#00f900" d="M2698 1368Q2812 1362 2890 1432M2963 1729Q3075 1680 3093 1545"/>
  </g>
  <path fill="#fff" d="M1955 1530l-45-12 39-36zM3114 1391l-39-29 39-20zM1452 1946l-42-24 35-24z"/>
  <path fill="#ff40ff" d="M1454 1888l-20-46 44 3zM1567 1889l-6-48 41 15z"/>
  <path fill="#00f900" d="M2921 1455l-47-11 29-34zM3098 1507l-27 40 43 6z"/>
  <g class="w"><text x="138" y="1371">Playback speed gradually increasing</text><text x="2417" y="1224">Slow Motion</text><text x="563" y="1745">Red Line is</text><text x="563" y="1835">real tiime</text></g>
  <g class="p"><text x="855" y="1531">Is moved to here</text><text x="1787" y="1694">This frame</text></g>
  <g class="g"><text x="1970" y="1398">Is moved to here</text><text x="2503" y="1783">This frame</text></g>
</svg>
</body>
</html>
```
FILE: styles.css
```css
:root {
  --bg: #282828;
  --gap: #171717;
  --field: #161616;
  --text: #9c9c9c;
  --light: #c4c4c4;
  --icon: #b4b4b4;
  --blue: #3f9df0;
  --tan: #a89677;
}
* { box-sizing: border-box; }
body {
  margin: 0;
  min-height: 100vh;
  display: flex;
  flex-direction: column;
  position: relative;
  overflow: hidden;
  background: var(--gap);
  color: var(--text);
  font: 21px/26px "Open Sans", "Noto Sans", sans-serif;
}
a { color: inherit; text-decoration: none; }
button, select, input { font: inherit; color: inherit; margin: 0; border: 0; background: none; padding: 0; }
svg { display: block; flex: none; fill: currentColor; }
.sprite { position: absolute; width: 0; height: 0; }
.ic { width: 30px; height: 30px; color: var(--icon); }
.ic.big { width: 36px; height: 34px; }
.ic.s { width: 28px; height: 28px; }
.small { width: 26px; height: 26px; color: var(--text); }
.small.white { color: #fff; }
.cur, .ic.cur { color: var(--blue); }
.dim { color: #444; }
.ic.dim, .dim .ic { color: #404040; }
.grow { flex: 1; }
.chip { width: 20px; height: 20px; background: var(--tan); flex: none; display: block; }
.x { font-size: 20px; width: 12px; }

/* menu bar */
.macbar {
  height: 46px; padding: 0 44px 0 38px; flex: none;
  display: flex; align-items: center;
  background: #222; border-bottom: 2px solid #4a4a4e;
  color: #fff; font: 500 27px/44px "Inter", sans-serif;
}
.macbar a { margin-right: 38px; }
.macbar .app { font-weight: 700; font-size: 28px; }
.macbar .logo { width: 34px; height: 34px; margin-right: 36px; }
.macbar svg { fill: #eee; color: #eee; }
.tray { display: flex; align-items: center; gap: 19px; margin-right: 28px; }
.tray svg { width: 40px; height: 34px; }
.tray .wide { width: 44px; }
.batt { width: 48px; height: 32px; margin: 0 24px 0 6px; }
.cal { width: 36px; height: 32px; }
.clock { margin-left: 36px; }
.user { margin: 0 22px 0 34px; }
.siri { width: 34px; height: 34px; margin-right: 34px; }
.notif { width: 36px; height: 28px; margin-left: 30px; }

.titlebar {
  height: 32px; flex: none; padding-left: 12px;
  display: flex; align-items: center; gap: 14px;
  background: linear-gradient(#e8e8e8, #d0d0d0); border-radius: 8px 8px 0 0;
  color: #4a4a4a; font: 22px/32px "Inter", sans-serif;
}
.light { width: 22px; height: 22px; border-radius: 50%; background: #fe5f57; border: 1px solid #0002; }
.light.red { background: radial-gradient(#600 3px, #fe5f57 4px); }
.light.amber { background: #febc2e; }
.light.green { background: #28c840; }
.doc { flex: 1; text-align: center; padding-right: 120px; }

/* tool bar */
.toolbar { height: 50px; flex: none; display: flex; align-items: center; background: var(--bg); }
.grip { width: 6px; height: 38px; margin-left: 11px; background: repeating-linear-gradient(#1a1a1a 0 2px, #282828 2px 4px); }
.tools { display: flex; padding: 0 6px; border-right: 2px solid #202020; }
.tools.last { width: 105px; border-color: #1c1c1c; height: 50px; align-items: center; }
.tools button { width: 50px; height: 44px; display: flex; align-items: center; justify-content: center; }
.tools button.on { border-radius: 6px; border: 2px solid #303030; width: 46px; margin: 0 2px; }
.on .ic { color: var(--blue); }
.off .ic { color: #484848; }
.tools button.sub { background: linear-gradient(135deg, transparent 50%, var(--icon) 50%) no-repeat 42px 36px / 6px 6px; }
.tools button.sub.on { background: linear-gradient(135deg, transparent 50%, var(--icon) 50%) no-repeat 36px 34px / 6px 6px var(--field); }
.script { margin-left: 44px; }
.auto { display: flex; align-items: center; gap: 8px; margin-left: 32px; padding-top: 4px; }
.auto input { appearance: none; width: 28px; height: 28px; border-radius: 4px; background: #8d8d8d url("data:image/svg+xml,%3Csvg xmlns='http://www.w3.org/2000/svg' viewBox='0 0 28 28'%3E%3Cpath fill='none' stroke='%23222' stroke-width='3' d='M6 14l6 6L23 7'/%3E%3C/svg%3E"); }
.spaces { display: flex; align-items: center; height: 50px; padding: 4px 16px 0 42px; gap: 87px; border-left: 2px solid #1c1c1c; border-right: 3px solid #333; }
.spaces .ic.cur { margin-left: -71px; }
.spaces .learn { margin-left: -48px; }
.spaces .ic:last-child { margin: -4px 0 0 -12px; }
.help { display: flex; align-items: center; gap: 24px; padding: 4px 8px 0 12px; }
.syncic { width: 40px; height: 24px; color: var(--icon); }
.field { display: flex; align-items: center; height: 38px; background: var(--field); border: 2px solid #303030; border-radius: 6px; }
.field .ic { width: 28px; height: 28px; margin-left: 6px; }
.field input { flex: 1; min-width: 0; padding: 0 20px; outline: 0; }
.help .field { width: 387px; }
.help input::placeholder { color: var(--light); opacity: 1; }
.smenu { width: 40px; height: 32px; margin-left: 8px; color: var(--icon); }

/* upper workspace */
.work { flex: 1066 1 0; min-height: 0; margin-top: 4px; display: grid; grid-template-columns: 720px minmax(0, 1fr) 436px; column-gap: 8px; grid-template-rows: minmax(0, 1fr); padding-left: 2px; }
.panel { background: var(--bg); display: flex; flex-direction: column; min-width: 0; }
.tabs { display: flex; align-items: center; height: 56px; flex: none; }
.tab { display: flex; align-items: center; height: 52px; white-space: nowrap; }
.tab.active { color: var(--light); border-bottom: 4px solid var(--icon); padding-top: 4px; }

.project .active { margin-left: 22px; padding-left: 2px; }
.project .active .ic { margin-left: 10px; }
.project .second { margin-left: 69px; gap: 20px; }
.over { height: 40px; border-left: 2px solid #222; padding-left: 46px; margin-right: 2px; }
.info { display: flex; gap: 10px; padding: 12px 14px 0 12px; font-size: 20px; }
.facts { margin-top: -2px; }
.fname { display: flex; align-items: center; }
.thumb { width: 228px; height: 130px; background: #000; padding-top: 44px; }
.thumb i { display: block; width: 28px; height: 28px; background: radial-gradient(#2200d0, #0c0048 50%); }
.field.wide { margin: 79px 12px 0 12px; height: 42px; }
.items { table-layout: fixed; width: 100%; border-collapse: collapse; margin-top: 11px; }
.c-pad { width: 33px; } .c-icon { width: 35px; } .c-tag { width: 42px; } .c-type { width: 40px; } .c-flow { width: 36px; }
.items th { background: #303030; height: 40px; padding: 0 0 0 12px; font-weight: 400; text-align: left; border-top: 2px solid #000; border-bottom: 2px solid #000; font-size: 20px; }
.items th + th:not(:last-child) { background: linear-gradient(#111, #111) no-repeat 0 7px / 2px 22px #303030; }
.items th:nth-child(3) { padding-left: 6px; }
.sorted { display: flex; justify-content: space-between; align-items: center; padding-right: 8px; }
.sorted svg { width: 24px; height: 12px; color: #2f8fff; }
.tagic { width: 26px; height: 26px; }
.items td { height: 38px; padding: 0; border-bottom: 2px solid #222; white-space: nowrap; }
.items td .ic { width: 34px; height: 32px; }
.items td:first-child { padding-left: 33px; }
.items td:nth-child(3) { padding-left: 12px; }
.items td:nth-child(4) { padding-left: 13px; }
.items td.name { padding-left: 5px; }
.sel td { background: #303030; }
.items .sel .name { background: #9e9e9e; color: #222; font-weight: 600; }
.items td.strip { background: #242424; }
.items td.strip .ic { width: 26px; height: 28px; margin-left: 4px; }
.rest { flex: 1; }
.foot { height: 38px; flex: none; display: flex; align-items: center; gap: 16px; border-top: 2px solid #000; padding: 0 36px 0 8px; }
.foot .ic { width: 34px; height: 32px; }
.foot .slim { width: 26px; height: 28px; }
.bpc { background: #1e1e1e; width: 90px; height: 30px; border-radius: 4px; color: var(--text); font-size: 20px; }
.hscroll { flex: 1; height: 36px; background: #1e1e1e; padding: 1px; margin-left: -6px; }
.hscroll i { display: block; width: 110px; height: 32px; border-radius: 14px; background: #303030; }

/* viewer */
.viewer .tabs { padding-left: 22px; gap: 17px; }
.viewer .x { margin-right: 1px; }
.viewer .tabs .ic { margin-left: -8px; }
.lockic { width: 22px; height: 26px; margin-right: 1px; color: var(--icon); }
.crumbs { display: flex; align-items: center; gap: 20px; height: 48px; padding: 4px 0 10px 37px; flex: none; }
.crumbs button { display: flex; align-items: center; justify-content: space-between; width: 140px; height: 36px; padding: 0 10px 0 18px; background: var(--field); border: 2px solid #303030; border-radius: 6px; color: var(--blue); }
.crumbs svg { width: 8px; height: 16px; }
.stage { flex: 1; min-height: 0; background: #1e1e1e; border: solid #000; border-width: 3px 0 2px; display: flex; align-items: center; justify-content: center; box-shadow: inset 0 2px #333; }
.canvas { position: relative; height: 95%; aspect-ratio: 16 / 9; background: repeating-conic-gradient(#ccc 0 25%, #fff 0 50%) 0 0 / 32px 32px; }
.shape { position: absolute; left: 0; top: 34.6%; width: 12%; aspect-ratio: 1; background: radial-gradient(circle, #2e0cff 0, #2405c8 9%, #0c0050 26%); }
.h { position: absolute; width: 14px; height: 14px; margin: -7px; background: var(--tan); }
.tl, .ml, .bl { left: 0; } .tc, .bc { left: 50%; } .tr, .mr, .br { left: 100%; }
.tl, .tc, .tr { top: 0; } .ml, .mr { top: 50%; } .bl, .bc, .br { top: 100%; }
.anchor { position: absolute; left: 50%; top: 50%; width: 32px; height: 32px; margin: -16px; }
.viewbar { height: 46px; flex: none; display: flex; align-items: center; padding: 2px 0 0 2px; border-top: 1px solid #333; color: var(--light); }
.viewbar > span, .viewbar > .on { width: 44px; height: 38px; display: flex; align-items: center; justify-content: center; flex: none; }
.viewbar > .on, .gbar > .on { background: var(--field); border: 1px solid #333; border-radius: 5px; }
select {
  --chev: url("data:image/svg+xml,%3Csvg xmlns='http://www.w3.org/2000/svg' viewBox='0 0 16 10'%3E%3Cpath fill='none' stroke='%23c4c4c4' stroke-width='2' d='M1 1l7 7 7-7'/%3E%3C/svg%3E");
  appearance: none; height: 38px; padding-left: 14px; border: 2px solid #303030; border-radius: 6px; color: var(--light);
  background: var(--chev) no-repeat right 9px center / 16px 10px #1e1e1e;
}
.viewbar select { padding-left: 12px; }
.w138 { width: 138px; } .w176 { width: 176px; margin: 0 1px; } .w216 { width: 216px; margin: 0 1px; } .w144 { width: 144px; margin: 0 1px; }
.time { width: 140px; height: 38px; margin: 0 1px; background: #1e1e1e; border: 2px solid #303030; border-radius: 6px; color: var(--text); }
.vsep { width: 2px; height: 34px; background: #222; }
.expo { color: var(--blue); font-weight: 400; margin-left: 6px; }

/* right-hand stack */
.side { display: flex; min-height: 0; overflow: hidden; }
.stack { width: 412px; background: var(--bg); display: flex; flex-direction: column; overflow: hidden; }
.stack h2 { margin: 0; flex: none; height: 60px; padding: 17px 24px 0; font: inherit; border-bottom: 4px solid var(--gap); }
.stack > h2:first-child { height: 58px; padding-top: 15px; }
.track { flex: 1; padding: 2px 2px 0 3px; background: #1e1e1e; }
.track i { display: block; height: 972px; border-radius: 10px; background: #303030; }
.char { height: 506px; flex: none; border-bottom: 4px solid var(--gap); padding: 0 12px 0 11px; }
.stack .bright { display: flex; justify-content: space-between; align-items: center; height: 60px; border: 0; padding: 0 4px 0 13px; color: var(--light); }
.fonts { display: flex; padding: 14px 0 10px; border-bottom: 2px solid #303030; gap: 8px; height: 113px; }
.picks { display: flex; flex-direction: column; gap: 10px; }
.split { width: 246px; padding-left: 12px; background: var(--chev) no-repeat right 9px center / 16px 10px, linear-gradient(90deg, var(--field) 204px, #303030 204px 206px, #1e1e1e 206px); }
.drop { width: 40px; height: 86px; }
.swatches { width: 88px; height: 88px; margin-left: 1px; }
.vals { display: grid; grid-template-columns: 50px 82px 78px 64px 84px 1fr; align-items: center; border-bottom: 2px solid #303030; height: 102px; grid-auto-rows: 41px; align-content: center; }
.vals.upper { padding-bottom: 10px; height: 100px; }
.gl { width: 40px; height: 38px; color: var(--icon); margin-left: -2px; }
.gl text { font-family: "Liberation Serif", serif; }
.gl .sans { font-family: "Noto Sans", sans-serif; }
.gl .cjk { font-family: "Noto Sans CJK JP", sans-serif; }
.v { white-space: nowrap; }
.v b { color: var(--blue); font-weight: 400; }
.faint { color: #585858; }
.vals.strokes { height: 58px; grid-template-columns: 50px 82px 29px 229px; margin-bottom: 2px; }
.faces { display: flex; align-items: center; height: 58px; padding: 8px 0 0 40px; gap: 2px; color: var(--icon); font: 700 32px/40px "Liberation Serif", serif; }
.faces button { width: 48px; height: 40px; white-space: nowrap; }
.faces .two { width: 50px; font-weight: 400; }
.faces .first { margin-left: 8px; }
.faces .gap { margin-left: 6px; }
.faces small { font-size: 24px; }
.faces sup, .faces sub { font-size: 16px; line-height: 10px; }

/* timeline */
.timeline { flex: 888 1 0; min-height: 0; display: flex; flex-direction: column; margin: 8px 2px 2px; border: 2px solid #3f8fe0; background: var(--bg); }
.timeline .tabs { height: 56px; align-items: flex-start; }
.timeline .tab { height: 50px; padding-top: 4px; }
.timeline .active { margin-left: 20px; }
.timeline .chip { margin-right: 22px; }
.timeline .x { margin-right: 18px; }
.timeline .third { margin-left: 66px; border-bottom: 4px solid transparent; }
.timeline .active .ic { margin-left: 12px; }
.split-view { flex: 1; min-height: 0; display: flex; }
.layers { width: 1420px; display: flex; flex-direction: column; flex: none; background: linear-gradient(90deg, transparent 1386px, #232323 1386px); }
.ctrl { display: flex; height: 68px; padding-top: 12px; flex: none; align-items: flex-start; background: var(--bg); }
.now { width: 199px; padding-left: 20px; white-space: nowrap; }
.now b { display: block; color: #44a6ff; font-size: 31px; line-height: 26px; padding-left: 3px; font-weight: 600; }
.now span { color: #1a6caf; font-size: 19px; line-height: 28px; display: block; }
.ctrl .field { width: 820px; height: 42px; margin-top: -1px; }
.switches { display: flex; gap: 20px; padding: 3px 0 0 30px; }
.switches .ic { width: 34px; height: 32px; margin-right: 2px; }
.switches .ic:nth-child(1), .switches .ic:nth-child(2) { margin-right: 10px; }
.switches .ic.cur { margin-left: 10px; }
.row { display: grid; grid-template-columns: 6px repeat(4, 30px) 16px 26px 28px 44px 26px 36px 394px 140px 190px repeat(8, 30px) 1fr; align-items: center; height: 34px; flex: none; width: 1386px; border-bottom: 2px solid #222; }
.row > * { grid-row: 1; }
.row .ic { width: 28px; height: 28px; justify-self: center; }
.k1 { grid-column: 2; } .k2 { grid-column: 3; } .k3 { grid-column: 4; } .k4 { grid-column: 5; }
.s1 { grid-column: 15; } .s2 { grid-column: 16; } .s3 { grid-column: 17; } .s4 { grid-column: 18; }
.s5 { grid-column: 19; } .s6 { grid-column: 20; } .s7 { grid-column: 21; } .s8 { grid-column: 22; }
.k-num { text-align: center; grid-column: 9; }
.head { background: #303030; height: 40px; border: solid #000; border-width: 2px 0; width: 1392px; font-size: 19px; }
.k-tag { grid-column: 7 / 9; justify-self: center; padding-left: 10px; } .k-src { grid-column: 11 / 13; padding-left: 10px; } .k-mode { grid-column: 13; padding-left: 3px; } .k-trk { grid-column: 14; display: flex; gap: 18px; padding-left: 14px; }
.layer { background: #4a4a4a; }
.box { height: 28px; width: 26px; background: #303030; justify-self: center; display: flex; align-items: center; justify-content: center; }
.layer .box .ic { width: 26px; height: 26px; }
.k-chev { grid-column: 7; } .timeline .k-chip { grid-column: 8; width: 24px; height: 24px; margin: 0 0 0 2px; } .layer .k-num { color: #b4b4b4; } .row .k-comp { grid-column: 11; width: 34px; height: 32px; }
.lname { grid-column: 12; width: 388px; height: 32px; border: 3px solid #9e9e9e; padding-left: 3px; font-weight: 600; color: #a8a8a8; }
.layer select { grid-column: 13; height: 32px; border: 0; border-radius: 0; color: var(--light); }
.k-t { grid-column: 14; justify-self: start; margin-left: 6px; }
.prop .k-num { display: flex; justify-content: center; }
.prop .k-chart { grid-column: 10; }
.dim2.ic { color: #555; }
.pname { grid-column: 11 / 13; background: #4a4a4a; height: 32px; line-height: 32px; padding-left: 6px; margin: 0 6px 0 10px; }
.pval { grid-column: 15 / 19; padding-left: 6px; color: var(--blue); }
.grapharea { flex: 1; min-width: 0; display: flex; flex-direction: column; }
.plot { flex: 740 1 0; min-height: 0; width: 100%; }
.gridl { fill: none; stroke: #000; stroke-opacity: .45; stroke-width: 2; }
.ticks text, .axis text { font-size: 20px; fill: #9c9c9c; text-anchor: middle; }
.axis text { text-anchor: start; fill: #aaa; }
.axis.end text { text-anchor: end; }
.curve { fill: none; stroke: #ccc; stroke-width: 3; }
.gbar { height: 58px; flex: none; display: flex; align-items: center; padding: 8px 0 0 474px; }
.gbar > .ic { margin: 0 9px 0 10px; width: 31px; height: 31px; }
.gbar > .ic.big { width: 38px; margin: 0 6px; }
.gbar > .on { width: 46px; height: 40px; margin: 0 2px; display: flex; align-items: center; justify-content: center; }
.gbar > .g1.on { margin-left: 52px; }
.gbar > .ic.g1, .gbar > .ic.big.g1 { margin-left: 57px; }
.edge { width: 32px; flex: none; border-left: 2px solid #1b1b1b; }
.edge svg { width: 32px; height: 180px; }
.status-row { display: flex; height: 34px; flex: none; background: #232323; }
.sl { width: 1420px; border-top: 2px solid #000; background: var(--bg); display: flex; align-items: center; gap: 4px; padding-left: 5px; color: #3f8fe0; }
.sl button { width: 34px; height: 32px; border: 1px solid #303030; }
.sl .ic { width: 28px; height: 28px; color: #3f8fe0; margin-left: 2px; }
.sl .ic.grey { color: var(--icon); }
.zoomer { width: 216px; display: flex; align-items: center; gap: 22px; padding-left: 12px; border-top: 2px solid #000; background: var(--bg); color: var(--icon); }
.zoomer svg { width: 20px; height: 12px; }
.zoomer .bigm { width: 34px; height: 18px; }
.zoomer input { appearance: none; width: 98px; height: 24px; }
.zoomer input::-webkit-slider-runnable-track { height: 4px; background: #444; }
.zoomer input::-webkit-slider-thumb { appearance: none; width: 20px; height: 20px; margin-top: -8px; border-radius: 50%; border: 3px solid #8a8a8a; background: var(--bg); }

/* annotation overlay */
.notes { position: absolute; inset: 0; width: 100%; height: 100%; pointer-events: none; }
.notes text { font: 75px "Courier New", "Liberation Mono", monospace; }
.notes .w { fill: #fff; } .notes .p { fill: #ff40ff; } .notes .g { fill: #00f900; }
```
